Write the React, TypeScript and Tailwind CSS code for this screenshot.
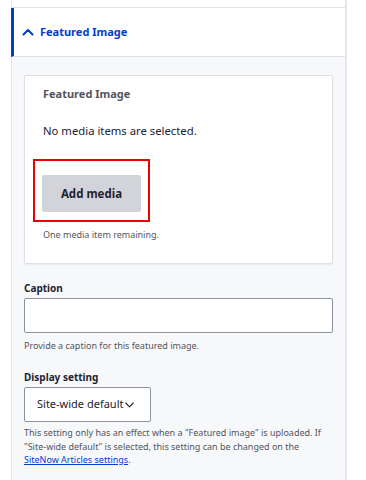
export default function App() {
  return (
    <div className="w-[366px] h-[480px] bg-white overflow-hidden font-['Noto_Sans',sans-serif] text-[#222330]">
      <div className="ml-[11px] w-[336px] h-full border-l border-r-2 border-[#e6e7eb] flex flex-col">
        <div className="h-[8px] border-b border-[#dedfe4]" />

        <div className="h-[49px] border-l-[3px] border-l-[#003ecc] -ml-px border-b border-[#dedfe4] flex items-center pl-[8px] gap-[6px]">
          <svg width="12" height="8" viewBox="0 0 12 8" fill="none" stroke="#003ecc" strokeWidth="2" strokeLinecap="round" strokeLinejoin="round">
            <path d="M1.5 6.5 L6 2 L10.5 6.5" />
          </svg>
          <span className="text-[11px] font-bold text-[#003ecc]">Featured Image</span>
        </div>

        <div className="flex-1 bg-[#f7f8fa] px-[12px] pt-[18px]">
          <div className="bg-white border border-[#dedfe4] rounded-[2px] shadow-[0_1px_2px_rgba(0,0,0,0.06)] pl-[18px] pt-[10px] pb-[22px]">
            <h3 className="text-[11px] font-bold text-[#545560] leading-[16px]">Featured Image</h3>
            <p className="mt-[21px] text-[11.3px] leading-[16px] text-[#222330]">No media items are selected.</p>

            <div className="mt-[20px] -ml-[10px] w-[117px] h-[63px] border-2 border-[#e00] pl-[7px] pt-[14px]">
              <button className="w-[99px] h-[37px] bg-[#d3d4d9] rounded-[2px] text-[11.5px] font-bold text-[#222330]">
                Add media
              </button>
            </div>

            <p className="mt-[6px] text-[9px] leading-[13px] text-[#545560]">One media item remaining.</p>
          </div>

          <label className="block mt-[17px] text-[10px] font-bold leading-[14px]">Caption</label>
          <div className="mt-[3px] h-[35px] bg-white border border-[#8e929c] rounded-[2px]" />
          <p className="mt-[7px] text-[9px] leading-[12px] text-[#545560]">Provide a caption for this featured image.</p>

          <label className="block mt-[18px] text-[10px] font-bold leading-[14px]">Display setting</label>
          <div className="mt-[3px] w-[127px] h-[35px] bg-white border border-[#8e929c] rounded-[2px] flex items-center pl-[12px] gap-[2px]">
            <span className="text-[11px] whitespace-nowrap">Site-wide default</span>
            <svg width="9" height="6" viewBox="0 0 9 6" fill="none" stroke="#222330" strokeWidth="1.1" strokeLinecap="round" strokeLinejoin="round">
              <path d="M0.8 1 L4.5 4.8 L8.2 1" />
            </svg>
          </div>
          <p className="mt-[4px] text-[9px] leading-[13.5px] text-[#545560] pr-[6px]">
            This setting only has an effect when a "Featured image" is uploaded. If "Site-wide default" is selected, this setting can be changed on the{" "}
            <a href="#" className="text-[#003ecc] underline">SiteNow Articles settings</a>.
          </p>
        </div>
      </div>
    </div>
  )
}
